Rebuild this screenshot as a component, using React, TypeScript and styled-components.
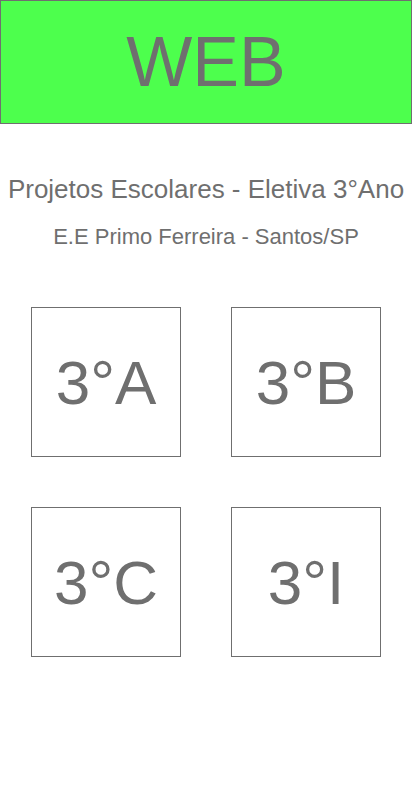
import React from "react";
import styled, { createGlobalStyle } from "styled-components";

const Global = createGlobalStyle`
  html, body { margin: 0; padding: 0; background: #ffffff; }
  body { font-family: "Liberation Sans", Arial, sans-serif; color: #6f6f6f; }
`;

const Page = styled.div`
  width: 412px;
  display: flex;
  flex-direction: column;
  align-items: center;
`;

const Header = styled.header`
  box-sizing: border-box;
  width: 412px;
  height: 124px;
  background: #4dff4d;
  border: 1px solid #6f6f6f;
  display: flex;
  align-items: center;
  justify-content: center;
  font-size: 70px;
  color: #6f6f6f;
  line-height: 1;
`;

const Title = styled.h1`
  margin: 50px 0 0;
  font-weight: 400;
  font-size: 26px;
  line-height: 30px;
  color: #6f6f6f;
  white-space: nowrap;
`;

const Subtitle = styled.h2`
  margin: 20px 0 0;
  font-weight: 400;
  font-size: 22px;
  line-height: 26px;
  color: #6f6f6f;
  white-space: nowrap;
`;

const Grid = styled.div`
  margin-top: 57px;
  display: grid;
  grid-template-columns: 150px 150px;
  gap: 50px;
`;

const ClassBox = styled.a`
  box-sizing: border-box;
  width: 150px;
  height: 150px;
  border: 1px solid #6f6f6f;
  display: flex;
  align-items: center;
  justify-content: center;
  font-size: 62px;
  color: #6f6f6f;
  text-decoration: none;
`;

const classes = ["3°A", "3°B", "3°C", "3°I"];

export default function App() {
  return (
    <>
      <Global />
      <Page>
        <Header>WEB</Header>
        <Title>Projetos Escolares - Eletiva 3°Ano</Title>
        <Subtitle>E.E Primo Ferreira - Santos/SP</Subtitle>
        <Grid>
          {classes.map((c) => (
            <ClassBox key={c}>{c}</ClassBox>
          ))}
        </Grid>
      </Page>
    </>
  );
}
